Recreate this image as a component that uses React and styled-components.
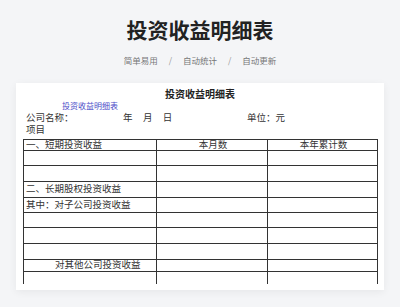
import styled, { createGlobalStyle } from "styled-components";

const GlobalStyle = createGlobalStyle`
  body {
    margin: 0;
    background: #f4f5f7;
    font-family: "Noto Sans CJK SC", "Noto Sans", sans-serif;
  }
`;

const Page = styled.div`
  width: 400px;
  height: 307px;
  overflow: hidden;
  display: flex;
  flex-direction: column;
  align-items: center;
`;

const Title = styled.h1`
  margin: 17px 0 0;
  font-size: 21px;
  line-height: 24px;
  font-weight: 700;
  color: #222;
`;

const Tags = styled.div`
  margin-top: 13px;
  display: flex;
  align-items: center;
  font-size: 8.5px;
  line-height: 12px;
  color: #777;
`;

const Slash = styled.span`
  margin: 0 11px;
  color: #999;
`;

const Card = styled.div`
  box-sizing: border-box;
  margin-top: 17px;
  width: 368px;
  height: 207px;
  background: #fff;
  padding: 5px 7px 0;
  overflow: hidden;
  box-shadow: 0 2px 8px rgba(0, 0, 0, 0.06);
  font-family: "Liberation Serif", "Noto Sans CJK SC", serif;
  color: #333;
`;

const DocTitle = styled.div`
  text-align: center;
  font-size: 10px;
  line-height: 12px;
  font-weight: 700;
  color: #222;
  font-family: "Noto Sans CJK SC", sans-serif;
`;

const SubTitle = styled.div`
  margin-top: 2px;
  padding-left: 39px;
  font-size: 8px;
  line-height: 10px;
  color: #4b4bc8;
`;

const InfoLine = styled.div`
  display: flex;
  padding-left: 3px;
  font-size: 9.5px;
  line-height: 12px;
`;

const InfoItem = styled.span`
  width: ${(p) => p.w}px;
`;

const Spaced = styled.span`
  word-spacing: 8px;
`;

const Table = styled.div`
  margin-top: 3px;
  width: 355px;
`;

const Row = styled.div`
  box-sizing: border-box;
  display: grid;
  grid-template-columns: 133px 111px 111px;
  height: ${(p) => p.h}px;
  border-top: 1px solid #333;
`;

const Cell = styled.div`
  box-sizing: border-box;
  border-left: 1px solid #333;
  padding-left: ${(p) => p.indent || 2}px;
  font-size: 9.5px;
  line-height: ${(p) => p.lh || 12}px;
  white-space: nowrap;
  overflow: hidden;
  text-align: ${(p) => (p.center ? "center" : "left")};
  &:last-child {
    border-right: 1px solid #333;
  }
`;

const rows = [
  { h: 11, label: "一、短期投资收益", c2: "本月数", c3: "本年累计数" },
  { h: 15 },
  { h: 16 },
  { h: 16, label: "二、长期股权投资收益", lh: 15 },
  { h: 15, label: "其中：对子公司投资收益", lh: 14 },
  { h: 15 },
  { h: 16 },
  { h: 16 },
  { h: 12, label: "对其他公司投资收益", indent: 31 },
  { h: 13 },
];

export default function App() {
  return (
    <Page>
      <GlobalStyle />
      <Title>投资收益明细表</Title>
      <Tags>
        <span>简单易用</span>
        <Slash>/</Slash>
        <span>自动统计</span>
        <Slash>/</Slash>
        <span>自动更新</span>
      </Tags>
      <Card>
        <DocTitle>投资收益明细表</DocTitle>
        <SubTitle>投资收益明细表</SubTitle>
        <InfoLine>
          <InfoItem w={97}>公司名称：</InfoItem>
          <InfoItem w={124}>
            <Spaced>年 月 日</Spaced>
          </InfoItem>
          <InfoItem>单位：元</InfoItem>
        </InfoLine>
        <InfoLine>项目</InfoLine>
        <Table>
          {rows.map((r, i) => (
            <Row key={i} h={r.h}>
              <Cell indent={r.indent} lh={r.lh || r.h - 1}>
                {r.label}
              </Cell>
              <Cell center lh={r.h - 1}>
                {r.c2}
              </Cell>
              <Cell center lh={r.h - 1}>
                {r.c3}
              </Cell>
            </Row>
          ))}
        </Table>
      </Card>
    </Page>
  );
}
